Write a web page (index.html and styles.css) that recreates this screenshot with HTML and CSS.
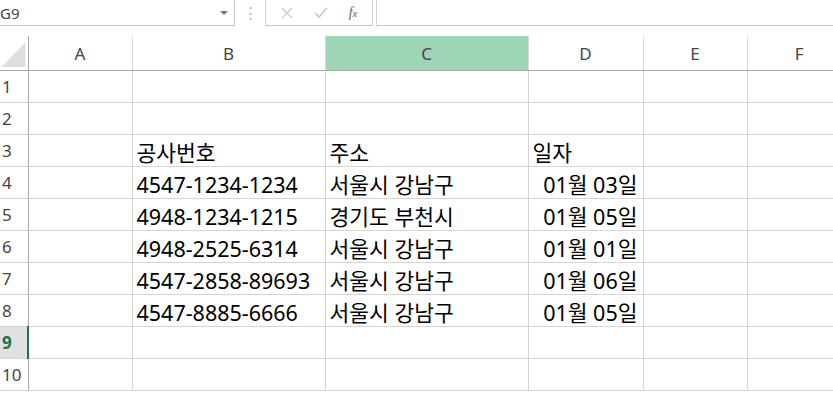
FILE: index.html
```html
<!DOCTYPE html>
<html lang="ko">
<head>
    <meta charset="UTF-8">
    <title>Sheet1</title>
    <link rel="stylesheet" href="styles.css">
</head>
<body>
    <!-- Name box + formula bar -->
    <div class="topbar">
        <div class="name-box">
            <span class="name-text">G9</span>
            <span class="name-arrow"></span>
        </div>
        <div class="grip">⋮</div>
        <div class="fx-buttons">
            <svg class="fx-icon" width="12" height="12" viewBox="0 0 12 12"><path d="M1 1 L11 11 M11 1 L1 11" stroke="#c8c8c8" stroke-width="1.3" fill="none"/></svg>
            <svg class="fx-icon" width="14" height="12" viewBox="0 0 14 12"><path d="M1 6 L5 10 L13 1" stroke="#c8c8c8" stroke-width="1.6" fill="none"/></svg>
            <span class="fx-text"><i>f</i><i class="x">x</i></span>
        </div>
        <div class="formula-input"></div>
    </div>

    <div class="sheet">
        <table class="grid">
            <colgroup>
                <col class="c-rh">
                <col class="c-a">
                <col class="c-b">
                <col class="c-c">
                <col class="c-d">
                <col class="c-e">
                <col class="c-f">
            </colgroup>
            <thead>
                <tr>
                    <th class="corner"><span class="corner-tri"></span></th>
                    <th>A</th>
                    <th>B</th>
                    <th class="sel">C</th>
                    <th>D</th>
                    <th>E</th>
                    <th>F</th>
                </tr>
            </thead>
            <tbody>
                <tr><td class="rh">1</td><td></td><td></td><td></td><td></td><td></td><td></td></tr>
                <tr><td class="rh">2</td><td></td><td></td><td></td><td></td><td></td><td></td></tr>
                <tr><td class="rh">3</td><td></td><td>공사번호</td><td>주소</td><td>일자</td><td></td><td></td></tr>
                <tr><td class="rh">4</td><td></td><td>4547-1234-1234</td><td>서울시 강남구</td><td class="date">01월 03일</td><td></td><td></td></tr>
                <tr><td class="rh">5</td><td></td><td>4948-1234-1215</td><td>경기도 부천시</td><td class="date">01월 05일</td><td></td><td></td></tr>
                <tr><td class="rh">6</td><td></td><td>4948-2525-6314</td><td>서울시 강남구</td><td class="date">01월 01일</td><td></td><td></td></tr>
                <tr><td class="rh">7</td><td></td><td class="overflow">4547-2858-89693</td><td>서울시 강남구</td><td class="date">01월 06일</td><td></td><td></td></tr>
                <tr><td class="rh">8</td><td></td><td>4547-8885-6666</td><td>서울시 강남구</td><td class="date">01월 05일</td><td></td><td></td></tr>
                <tr><td class="rh active">9</td><td></td><td></td><td></td><td></td><td></td><td></td></tr>
                <tr><td class="rh">10</td><td></td><td></td><td></td><td></td><td></td><td></td></tr>
            </tbody>
        </table>
    </div>
</body>
</html>
```

FILE: styles.css
```css
/* General */
body {
    margin: 0;
    width: 833px;
    height: 396px;
    overflow: hidden;
    background-color: #ffffff;
    font-family: "Noto Sans", "Noto Sans CJK KR", sans-serif;
    color: #000;
}

/* Formula bar */
.topbar {
    display: flex;
    height: 26px;
}

.name-box {
    width: 234px;
    border-right: 1px solid #c6c6c6;
    border-bottom: 1px solid #c6c6c6;
    display: flex;
    align-items: center;
    justify-content: space-between;
}

.name-text {
    margin-left: 0;
    font-size: 15px;
    color: #444;
}

.name-arrow {
    width: 0;
    height: 0;
    border-left: 4px solid transparent;
    border-right: 4px solid transparent;
    border-top: 4px solid #777;
    margin-right: 6px;
}

.grip {
    width: 30px;
    text-align: center;
    color: #b0b0b0;
    font-size: 15px;
    line-height: 24px;
}

.fx-buttons {
    width: 108px;
    border-left: 1px solid #d0d0d0;
    border-right: 1px solid #d0d0d0;
    border-bottom: 1px solid #c6c6c6;
    display: flex;
    align-items: center;
    justify-content: space-around;
    padding: 0 4px;
    box-sizing: border-box;
}

.fx-text {
    font-family: "Liberation Serif", serif;
    font-size: 14px;
    color: #666;
}

.fx-text .x {
    font-size: 11px;
}

.formula-input {
    flex: 1;
    margin-left: 3px;
    border-left: 1px solid #d0d0d0;
    border-bottom: 1px solid #c6c6c6;
}

/* Sheet */
.sheet {
    margin-top: 10px;
    width: 833px;
    overflow: hidden;
}

.grid {
    border-collapse: collapse;
    table-layout: fixed;
    width: 851px;
}

.c-rh { width: 28px; }
.c-a { width: 104px; }
.c-b { width: 193px; }
.c-c { width: 203px; }
.c-d { width: 115px; }
.c-e { width: 104px; }
.c-f { width: 104px; }

.grid th {
    height: 34px;
    padding: 0;
    font-weight: normal;
    font-size: 17px;
    color: #444;
    border-left: 1px solid #d8d8d8;
    border-bottom: 1px solid #a8a8a8;
}

.grid th.sel {
    background-color: #9fd5b7;
}

.grid th.corner {
    position: relative;
    border-left: none;
    border-right: 1px solid #a8a8a8;
}

.corner-tri {
    position: absolute;
    right: 2px;
    bottom: 3px;
    width: 24px;
    height: 25px;
    background-color: #dfdfdf;
    clip-path: polygon(100% 0, 100% 100%, 0 100%);
}

.grid td {
    height: 31px;
    padding: 0 4px;
    font-size: 21.5px;
    line-height: 26px;
    vertical-align: bottom;
    white-space: nowrap;
    border: 1px solid #d4d4d4;
    border-top: none;
}

.grid td:last-child {
    border-right: none;
}

.grid td.rh {
    padding: 0 0 0 2px;
    font-size: 17px;
    color: #444;
    vertical-align: middle;
    border-left: none;
    border-right: 1px solid #a8a8a8;
    border-bottom: 1px solid #d4d4d4;
}

.grid td.rh.active {
    background-color: #e1e1e1;
    color: #217346;
    font-weight: bold;
    border-right: 2px solid #217346;
}

.grid td.overflow {
    overflow: visible;
}

.grid td.date {
    text-align: right;
    padding-right: 5px;
}
```
